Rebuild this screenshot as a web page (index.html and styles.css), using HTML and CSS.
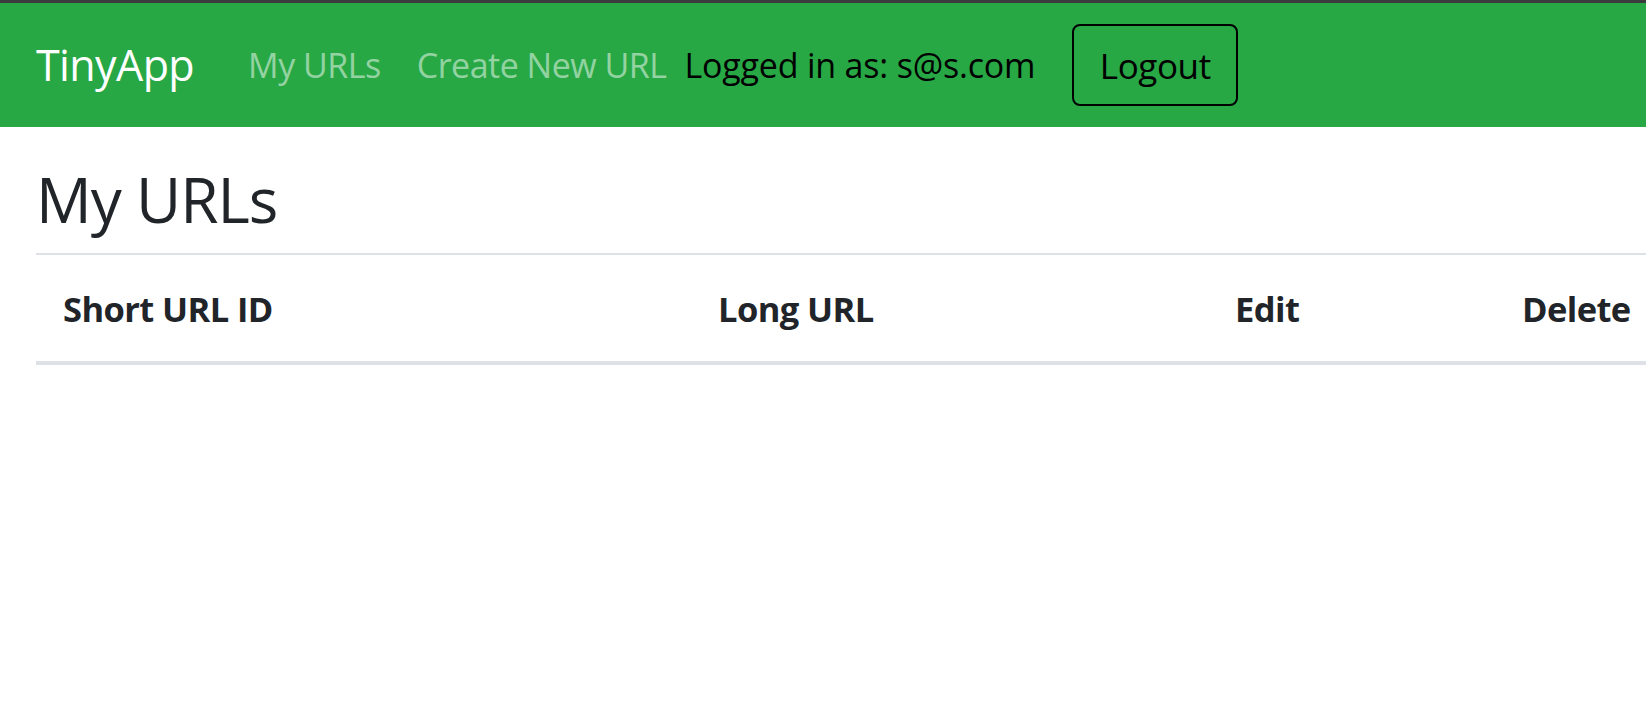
FILE: index.html
```html
<!DOCTYPE html>
<html lang="en">
<head>
<meta charset="utf-8">
<title>TinyApp</title>
<link rel="stylesheet" href="styles.css">
</head>
<body>
<div class="topbar"></div>
<nav class="navbar">
  <a class="brand" href="#">TinyApp</a>
  <a class="nav-link" href="#">My URLs</a>
  <a class="nav-link" href="#">Create New URL</a>
  <span class="user">Logged in as: s@s.com</span>
  <button class="btn-logout" type="button">Logout</button>
</nav>
<main class="container">
  <h1 class="title">My URLs</h1>
  <table class="table">
    <thead>
      <tr>
        <th class="col-short">Short URL ID</th>
        <th class="col-long">Long URL</th>
        <th class="col-edit">Edit</th>
        <th class="col-delete">Delete</th>
      </tr>
    </thead>
    <tbody></tbody>
  </table>
</main>
</body>
</html>
```
FILE: styles.css
```css
* { box-sizing: border-box; }
html, body {
  margin: 0;
  padding: 0;
  background: #fff;
  overflow: hidden;
}
body {
  font-family: "Open Sans", "Noto Sans", "Liberation Sans", sans-serif;
  color: #212529;
}
.topbar {
  height: 3px;
  background: #3a3b3c;
}
.navbar {
  height: 124px;
  background: #28a745;
  display: flex;
  align-items: center;
  padding: 0 36px;
}
.brand {
  font-size: 43px;
  letter-spacing: -0.6px;
  line-height: 1.5;
  color: #fff;
  text-decoration: none;
  margin-right: 36px;
}
.nav-link {
  font-size: 34px;
  letter-spacing: -0.5px;
  line-height: 1.5;
  color: rgba(255, 255, 255, 0.5);
  text-decoration: none;
  padding: 0 18px;
}
.user {
  font-size: 34px;
  letter-spacing: -0.2px;
  line-height: 1.5;
  color: #000;
}
.btn-logout {
  margin-left: 37px;
  width: 166px;
  height: 82px;
  background: transparent;
  border: 2px solid #000;
  border-radius: 8px;
  font-family: inherit;
  font-size: 35px;
  letter-spacing: -0.4px;
  color: #000;
  padding: 0;
}
.container {
  padding: 0 0 0 36px;
}
.title {
  margin: 35px 0 17px;
  font-size: 62px;
  font-weight: 500;
  line-height: 1.2;
  letter-spacing: -1px;
  color: #212529;
}
.table {
  width: 100%;
  border-collapse: collapse;
  table-layout: fixed;
}
.table th {
  text-align: left;
  font-size: 34.5px;
  font-weight: 700;
  letter-spacing: -0.6px;
  line-height: 1.5;
  padding: 28px 27px 26px;
  border-top: 2px solid #dee2e6;
  border-bottom: 4px solid #dee2e6;
  white-space: nowrap;
}
.col-short { width: 655px; }
.col-long { width: 517px; }
.col-edit { width: 287px; }
.col-delete { width: auto; }
```
